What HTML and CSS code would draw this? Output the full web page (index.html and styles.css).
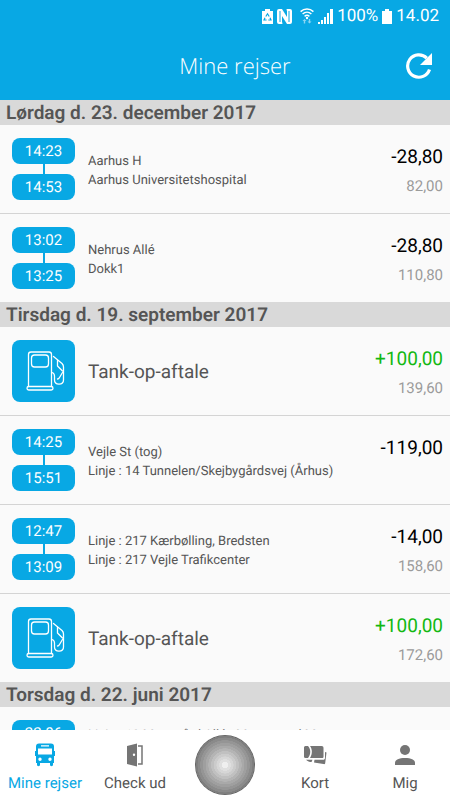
FILE: index.html
```html
<!DOCTYPE html>
<html lang="da">
<head>
    <meta charset="UTF-8">
    <meta name="viewport" content="width=device-width, initial-scale=1.0">
    <title>Mine rejser</title>
    <link rel="stylesheet" href="styles.css">
</head>
<body>

    <!-- Shared icons -->
    <svg class="sprite" aria-hidden="true">
        <symbol id="pump" viewBox="0 0 62 62">
            <g fill="none" stroke="#fff" stroke-width="1.3" stroke-linejoin="round" stroke-linecap="round">
                <path d="M16 46.500V14.500a2.500 2.500 0 0 1 2.500-2.500h18a2.500 2.500 0 0 1 2.500 2.500V46.500"/>
                <rect x="19" y="15" width="17" height="12" rx="3"/>
                <rect x="14.500" y="46.500" width="26" height="3.500" rx="1.700"/>
                <path d="M41 16.500L49.500 23.500c1 1 1.500 2 1.500 3.500v13c0 5.500-9 5.500-9 0v-4c0-2-.8-3-2.500-3.500"/>
                <path d="M45 20v6l5 5"/>
                <path d="M50 32.500l-3 5c-.5 1-1 1.500-2 1.500"/>
            </g>
        </symbol>
    </svg>

    <div class="app">
        <header class="header">
            <div class="status-bar">
                <svg width="11" height="15" viewBox="0 0 11 15" aria-hidden="true">
                    <path fill="#fff" d="M3 0h5v2h3v13H0V2h3z"/>
                    <path fill="none" stroke="#08a8e4" stroke-width="1.200" d="M3.800 7.500l1.700-2.700 1.700 2.700M8 8.700l1 2.300H6.300M4.600 11H2l1-2.300"/>
                </svg>
                <svg width="15" height="15" viewBox="0 0 15 15" aria-hidden="true">
                    <path fill="#fff" d="M2 0h3l5 8V2.500L9.500 0H13a2 2 0 0 1 2 2v11a2 2 0 0 1-2 2h-3L5 7v5.500L5.500 15H2a2 2 0 0 1-2-2V2a2 2 0 0 1 2-2z"/>
                    <path fill="none" stroke="#08a8e4" stroke-width="1" d="M3 2v11M12 2v11"/>
                </svg>
                <svg class="wifi" width="14" height="16" viewBox="0 0 14 16" aria-hidden="true">
                    <g fill="none" stroke="#fff" stroke-width="1.500">
                        <path d="M.6 3.600c3.800-3.500 9-3.500 12.800 0M2.600 6c2.600-2.300 6.200-2.300 8.800 0M4.600 8.300c1.500-1.200 3.300-1.200 4.800 0"/>
                    </g>
                    <circle cx="7" cy="10" r="1.200" fill="#fff"/>
                    <path fill="#8fd6f3" d="M4.500 11l2 2H5.200v2.500H3.800V13H2.500zM9.500 15.500l-2-2h1.300V11h1.400v2.500h1.300z"/>
                </svg>
                <svg width="15" height="15" viewBox="0 0 15 15" aria-hidden="true">
                    <path fill="#fff" d="M0 13h2v2H0zM3 11h2v4H3zM6 8h2v7H6zM9 4h2v11H9zM12 0h3v15h-3z"/>
                </svg>
                <span class="battery-level">100%</span>
                <svg width="10" height="15" viewBox="0 0 10 15" aria-hidden="true">
                    <path fill="#fff" d="M3 0h4v2h3v13H0V2h3z"/>
                </svg>
                <span class="clock">14.02</span>
            </div>
            <div class="title-bar">
                <h1>Mine rejser</h1>
                <button class="refresh" type="button" aria-label="Opdater">
                    <svg width="26" height="26" viewBox="0 0 26 26" aria-hidden="true">
                        <path fill="none" stroke="#fff" stroke-width="3.200" d="M23.500 16.500A11.200 11.200 0 1 1 20.800 5.100"/>
                        <path fill="#fff" d="M26 0v12H14z"/>
                    </svg>
                </button>
            </div>
        </header>

        <main class="trips">
            <h2>Lørdag d. 23. december 2017</h2>
            <ul>
                <li class="trip">
                    <div class="times"><time>14:23</time><time>14:53</time></div>
                    <div class="stops"><p>Aarhus H</p><p>Aarhus Universitetshospital</p></div>
                    <div class="price"><p class="amount">-28,80</p><p class="balance">82,00</p></div>
                </li>
                <li class="trip">
                    <div class="times"><time>13:02</time><time>13:25</time></div>
                    <div class="stops"><p>Nehrus Allé</p><p>Dokk1</p></div>
                    <div class="price"><p class="amount">-28,80</p><p class="balance">110,80</p></div>
                </li>
            </ul>

            <h2>Tirsdag d. 19. september 2017</h2>
            <ul>
                <li class="trip">
                    <svg class="pump" aria-hidden="true"><use href="#pump"/></svg>
                    <p class="top-up">Tank-op-aftale</p>
                    <div class="price"><p class="amount added">+100,00</p><p class="balance">139,60</p></div>
                </li>
                <li class="trip">
                    <div class="times"><time>14:25</time><time>15:51</time></div>
                    <div class="stops"><p>Vejle St (tog)</p><p>Linje : 14 Tunnelen/Skejbygårdsvej (Århus)</p></div>
                    <div class="price"><p class="amount">-119,00</p></div>
                </li>
                <li class="trip">
                    <div class="times"><time>12:47</time><time>13:09</time></div>
                    <div class="stops"><p>Linje : 217 Kærbølling, Bredsten</p><p>Linje : 217 Vejle Trafikcenter</p></div>
                    <div class="price"><p class="amount">-14,00</p><p class="balance">158,60</p></div>
                </li>
                <li class="trip">
                    <svg class="pump" aria-hidden="true"><use href="#pump"/></svg>
                    <p class="top-up">Tank-op-aftale</p>
                    <div class="price"><p class="amount added">+100,00</p><p class="balance">172,60</p></div>
                </li>
            </ul>

            <h2>Torsdag d. 22. juni 2017</h2>
            <ul>
                <li class="trip long">
                    <div class="times"><time>22:06</time></div>
                    <div class="stops"><p>Linje : 18 Mosegård Allé - Moesgaard Mus</p></div>
                </li>
            </ul>
        </main>

        <nav class="tabs">
            <a class="tab active" href="#rejser">
                <svg width="20" height="24" viewBox="0 0 20 24" aria-hidden="true">
                    <path fill="currentColor" fill-rule="evenodd" d="M4 .5h12c2 0 3 1 3 3V8h1v5h-1v7h-1v2c0 1.500-3 1.500-3 0v-2H5v2c0 1.500-3 1.500-3 0v-2H1v-7H0V8h1V3.500c0-2 1-3 3-3zM3 5.500v6h14v-6zM6 2.200v1.300h8V2.200zM5 14.500a1.700 1.700 0 1 0 0 3.400 1.700 1.700 0 0 0 0-3.400zM15 14.500a1.700 1.700 0 1 0 0 3.400 1.700 1.700 0 0 0 0-3.400z"/>
                </svg>
                Mine rejser
            </a>
            <a class="tab" href="#check-ud">
                <svg width="18" height="24" viewBox="0 0 18 24" aria-hidden="true">
                    <path fill="#757575" fill-rule="evenodd" d="M1 3L11 .5v23L1 21zM8 10.500a1.200 1.200 0 1 0 0 2.400 1.200 1.200 0 0 0 0-2.400z"/>
                    <path fill="none" stroke="#757575" stroke-width="1.500" d="M12 3h4v18h-4"/>
                </svg>
                Check ud
            </a>
            <button class="check-in" type="button" aria-label="Check ind"></button>
            <a class="tab" href="#kort">
                <svg width="24" height="24" viewBox="0 0 24 24" aria-hidden="true">
                    <g fill="#757575">
                        <path d="M2.500 3H5c3 3 3 8.500 0 12H2.500C.8 15 1 13.500 1 13V5c0-1 .2-2 1.500-2z"/>
                        <path d="M7 3h11.500c1.500 0 2 .8 2 2v8.500c0 1-.5 1.500-1.500 1.500H7c2.500-4 2.500-8.500 0-12z"/>
                        <path d="M22 9l1.500.500-1.300 10.800c-.2.700-.8 1-1.700.8L11 19.500l.5-2.700H20c1.300 0 2-.7 2-1.800z"/>
                        <path d="M3 16.700h6.500L8.500 19c-2 0-4-.5-5.500-2.300z"/>
                    </g>
                </svg>
                Kort
            </a>
            <a class="tab" href="#mig">
                <svg width="20" height="24" viewBox="0 0 20 24" aria-hidden="true">
                    <circle cx="10" cy="7" r="5" fill="#757575"/>
                    <path fill="#757575" d="M0 22v-2c0-3.500 4-5 10-5s10 1.500 10 5v2z"/>
                </svg>
                Mig
            </a>
        </nav>
    </div>

</body>
</html>
```
FILE: styles.css
```css
/* General Styles */
* {
    box-sizing: border-box;
}

body {
    font-family: Roboto, "Liberation Sans", sans-serif;
    background-color: #fafafa;
    color: #555;
    margin: 0;
    text-rendering: geometricPrecision;
}

h1, h2, p, ul {
    margin: 0;
    padding: 0;
}

ul {
    list-style: none;
}

button {
    border: none;
    padding: 0;
    cursor: pointer;
}

.sprite {
    display: none;
}

.app {
    display: flex;
    flex-direction: column;
    height: 100vh;
}

/* Header */
.header {
    background-color: #08a8e4;
    color: white;
    flex: none;
}

.status-bar {
    display: flex;
    align-items: center;
    justify-content: flex-end;
    gap: 4px;
    height: 32px;
    padding: 0 11px;
    font-size: 17px;
}

.wifi {
    margin-left: 4px;
}

.title-bar {
    display: grid;
    grid-template-columns: 1fr auto 1fr;
    align-items: center;
    height: 68px;
    padding: 0 18px;
}

h1 {
    grid-column: 2;
    padding-left: 20px;
    font-family: "Open Sans", sans-serif;
    font-size: 22px;
    font-weight: 300;
    line-height: 28px;
}

.refresh {
    justify-self: end;
    display: flex;
    background: none;
}

/* Trip list */
.trips {
    flex: 1;
    min-height: 0;
    overflow-y: auto;
    scrollbar-width: none;
}

h2 {
    padding: 0 6px;
    background-color: #d9d9d9;
    font-size: 19px;
    font-weight: 600;
    line-height: 25px;
}

.trip {
    display: flex;
    align-items: center;
    gap: 13px;
    padding: 13px 7px 13px 12px;
}

.trip + .trip {
    border-top: 1px solid #d4d4d4;
}

.times {
    display: flex;
    flex-direction: column;
    gap: 10px;
    width: 63px;
    background: linear-gradient(#08a8e4, #08a8e4) center / 2px 100% no-repeat;
}

.times time {
    background-color: #08a8e4;
    border-radius: 8px;
    color: white;
    font-size: 15px;
    line-height: 26px;
    text-align: center;
}

.pump {
    width: 63px;
    height: 62px;
    background-color: #08a8e4;
    border-radius: 8px;
}

.stops {
    flex: 1;
    min-width: 0;
    padding-top: 4px;
    font-size: 13px;
    line-height: 19px;
    white-space: nowrap;
}

.top-up {
    flex: 1;
    font-size: 19px;
}

/* Prices */
.price {
    align-self: flex-start;
    padding-top: 6px;
    text-align: right;
}

.amount {
    color: #000;
    font-size: 19px;
    line-height: 26px;
}

.added {
    color: #12b812;
}

.balance {
    padding-top: 5px;
    color: #9b9b9b;
    font-size: 15px;
    line-height: 22px;
}

/* Bottom Tabs */
.tabs {
    flex: none;
    display: grid;
    grid-template-columns: repeat(5, 1fr);
    align-items: center;
    justify-items: center;
    height: 70px;
    background-color: #fff;
}

.tab {
    display: flex;
    flex-direction: column;
    align-items: center;
    gap: 6px;
    padding-top: 5px;
    color: #555;
    font-size: 15px;
    line-height: 20px;
    text-decoration: none;
    white-space: nowrap;
}

.active {
    color: #08a8e4;
}

.check-in {
    width: 60px;
    height: 60px;
    border-radius: 50%;
    background: radial-gradient(circle closest-side,
        #efefef 0 10%, #dfdfdf 11% 19%, #d6d6d6 20% 28%, #cbcbcb 29% 37%,
        #c0c0c0 38% 46%, #b4b4b4 47% 55%, #a9a9a9 56% 64%, #9f9f9f 65% 73%,
        #959595 74% 82%, #8a8a8a 83% 91%, #7e7e7e 92% 97%, #666 98% 100%);
}
```
